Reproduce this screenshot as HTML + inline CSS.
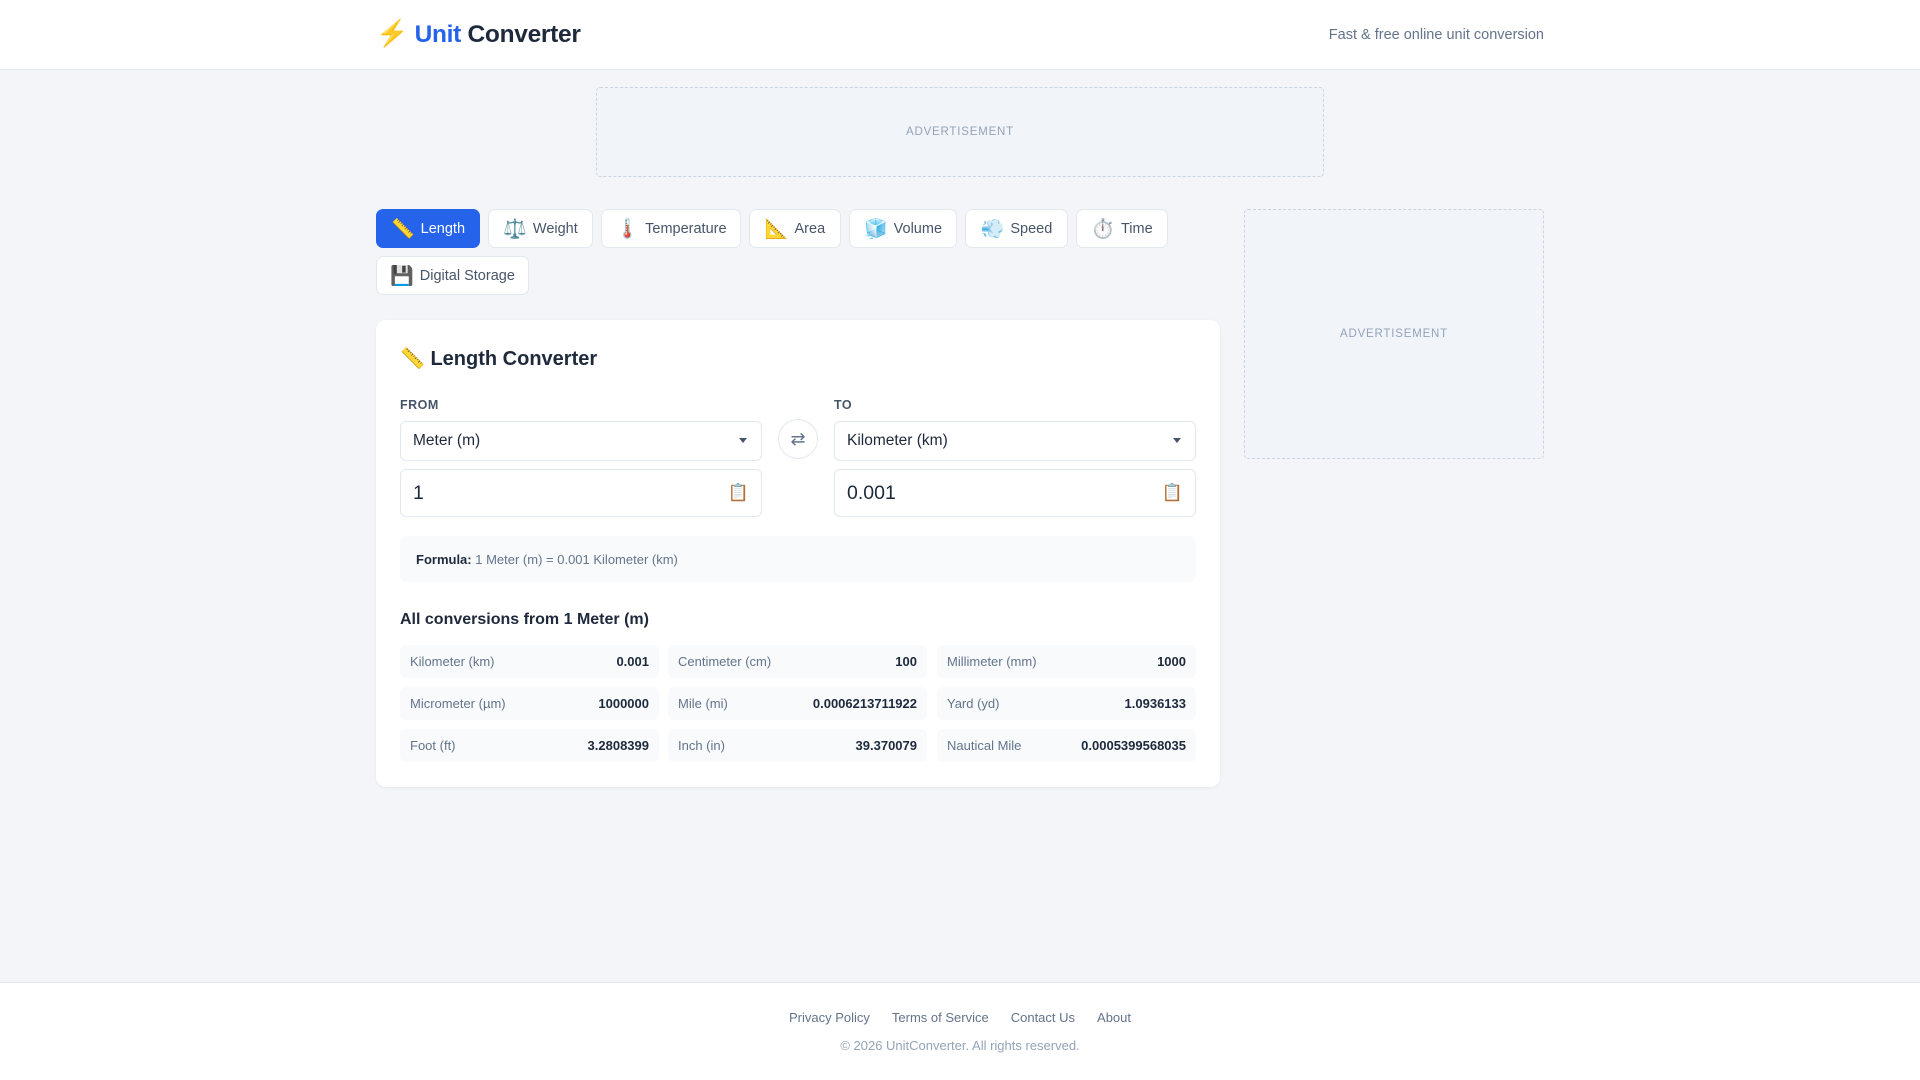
<!DOCTYPE html>
<html><head><meta charset="utf-8"><style>
*{box-sizing:border-box;margin:0;padding:0}
body{width:1920px;height:1080px;background:#f3f5f9;font-family:"Liberation Sans","DejaVu Sans",sans-serif;color:#1e293b;position:relative;overflow:hidden}
header{position:absolute;left:0;top:0;width:1920px;height:70px;background:#fff;border-bottom:1px solid #e2e8f0}
.logo{position:absolute;left:376px;top:18px;font-size:24.5px;font-weight:bold;letter-spacing:-0.3px}
.logo .u{color:#2563eb}
.logo .e{font-size:26px}
.tag{position:absolute;right:376px;top:27px;font-size:14.5px;color:#64748b}
.ad{position:absolute;border:1px dashed #cbd5e1;background:#f1f4f8;border-radius:4px;color:#94a3b8;font-size:11.5px;letter-spacing:.8px;display:flex;align-items:center;justify-content:center}
.tabs{position:absolute;left:376px;top:209px;width:844px}
.tab{position:absolute;height:39px;background:#fff;border:1px solid #e2e8f0;border-radius:7px;font-size:14.5px;color:#475569;display:flex;align-items:center;justify-content:center;gap:6px}
.tab i{font-style:normal;font-size:19px}
.tab.on{background:#2563eb;color:#fff;border-color:#2563eb}
.card{position:absolute;left:376px;top:320px;width:844px;height:467px;background:#fff;border-radius:10px;box-shadow:0 1px 3px rgba(0,0,0,.06)}
.abs{position:absolute}
.lbl{font-size:12.5px;font-weight:bold;color:#475569;letter-spacing:.5px}
.sel,.inp{position:absolute;background:#fff;border:1px solid #e2e8f0;border-radius:6px;display:flex;align-items:center;padding-left:12px}
.sel{height:40px;font-size:15.5px;color:#1e293b}
.sel:after{content:"";position:absolute;right:14px;top:16px;border:4px solid transparent;border-top:5px solid #475569}
.inp{height:48px;font-size:19.5px}
.inp .c{position:absolute;right:12px;top:13px;font-size:17px}
.swap{position:absolute;left:402px;top:99px;width:40px;height:40px;border:1px solid #e2e8f0;border-radius:50%;display:flex;align-items:center;justify-content:center;color:#64748b;font-size:18px}
.formula{position:absolute;left:24px;top:216px;width:796px;height:46px;background:#f8fafc;border-radius:7px;font-size:13px;color:#64748b;padding:16px 16px}
.formula b{color:#1e293b}
.cell{position:absolute;width:259px;height:33px;background:#f8fafc;border-radius:6px;font-size:13px;color:#64748b;display:flex;align-items:center;justify-content:space-between;padding:0 10px}
.cell b{color:#1e293b}
footer{position:absolute;left:0;top:982px;width:1920px;height:98px;background:#fff;border-top:1px solid #e2e8f0;text-align:center}
.links{margin-top:27px;font-size:13px;color:#64748b}
.links span{margin:0 11px}
.copy{margin-top:13px;font-size:13px;color:#94a3b8}
</style></head><body>
<header><div class="logo"><span class="e">⚡️</span> <span class="u">Unit</span> Converter</div><div class="tag">Fast &amp; free online unit conversion</div></header>
<div class="ad" style="left:596px;top:87px;width:728px;height:90px">ADVERTISEMENT</div>
<div class="ad" style="left:1244px;top:209px;width:300px;height:250px">ADVERTISEMENT</div>
<div class="tabs">
<div class="tab on" style="left:0;top:0;width:104px"><i>📏</i>Length</div>
<div class="tab" style="left:112px;top:0;width:105px"><i>⚖️</i>Weight</div>
<div class="tab" style="left:225px;top:0;width:140px"><i>🌡️</i>Temperature</div>
<div class="tab" style="left:373px;top:0;width:92px"><i>📐</i>Area</div>
<div class="tab" style="left:473px;top:0;width:108px"><i>🧊</i>Volume</div>
<div class="tab" style="left:589px;top:0;width:103px"><i>💨</i>Speed</div>
<div class="tab" style="left:700px;top:0;width:92px"><i>⏱️</i>Time</div>
<div class="tab" style="left:0;top:47px;width:153px"><i>💾</i>Digital Storage</div>
</div>
<div class="card">
<div class="abs" style="left:24px;top:26px;font-size:20px;font-weight:bold">📏 Length Converter</div>
<div class="abs lbl" style="left:24px;top:78px">FROM</div>
<div class="abs lbl" style="left:458px;top:78px">TO</div>
<div class="sel" style="left:24px;top:101px;width:362px">Meter (m)</div>
<div class="sel" style="left:458px;top:101px;width:362px">Kilometer (km)</div>
<div class="swap">⇄</div>
<div class="inp" style="left:24px;top:149px;width:362px">1<span class="c">📋</span></div>
<div class="inp" style="left:458px;top:149px;width:362px">0.001<span class="c">📋</span></div>
<div class="formula"><b>Formula:</b> 1 Meter (m) = 0.001 Kilometer (km)</div>
<div class="abs" style="left:24px;top:291px;font-size:16px;font-weight:bold">All conversions from 1 Meter (m)</div>
<div class="cell" style="left:24px;top:325px">Kilometer (km)<b>0.001</b></div>
<div class="cell" style="left:292px;top:325px">Centimeter (cm)<b>100</b></div>
<div class="cell" style="left:561px;top:325px">Millimeter (mm)<b>1000</b></div>
<div class="cell" style="left:24px;top:367px">Micrometer (µm)<b>1000000</b></div>
<div class="cell" style="left:292px;top:367px">Mile (mi)<b>0.0006213711922</b></div>
<div class="cell" style="left:561px;top:367px">Yard (yd)<b>1.0936133</b></div>
<div class="cell" style="left:24px;top:409px">Foot (ft)<b>3.2808399</b></div>
<div class="cell" style="left:292px;top:409px">Inch (in)<b>39.370079</b></div>
<div class="cell" style="left:561px;top:409px">Nautical Mile<b>0.0005399568035</b></div>
</div>
<footer><div class="links"><span>Privacy Policy</span><span>Terms of Service</span><span>Contact Us</span><span>About</span></div><div class="copy">© 2026 UnitConverter. All rights reserved.</div></footer>
</body></html>
